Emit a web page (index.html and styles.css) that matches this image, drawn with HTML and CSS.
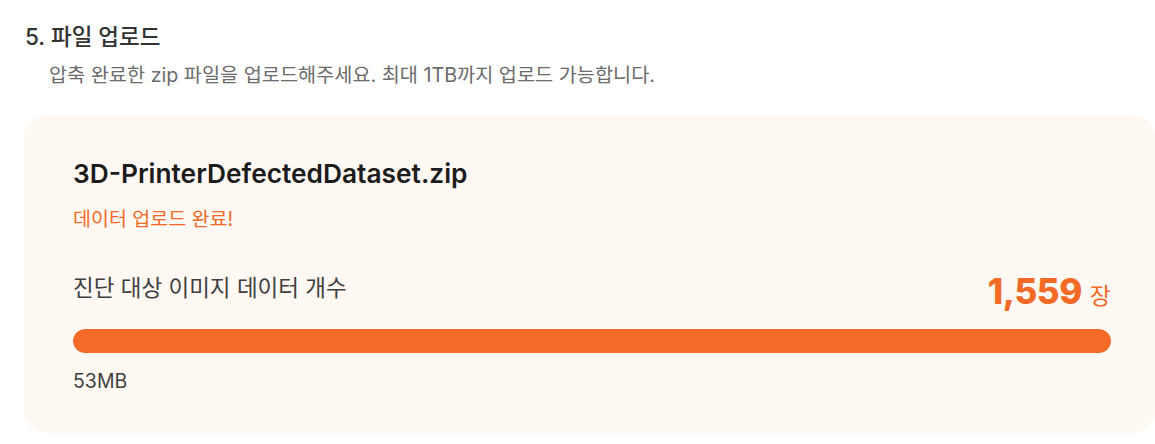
FILE: index.html
```html
<!DOCTYPE html>
<html lang="ko">
<head>
<meta charset="utf-8">
<link rel="stylesheet" href="styles.css">
</head>
<body>
<section class="upload">
  <h2 class="title">5. 파일 업로드</h2>
  <p class="desc">압축 완료한 zip 파일을 업로드해주세요. 최대 1TB까지 업로드 가능합니다.</p>
  <div class="card">
    <div class="filename">3D-PrinterDefectedDataset.zip</div>
    <div class="status">데이터 업로드 완료!</div>
    <div class="count-row">
      <span class="count-label">진단 대상 이미지 데이터 개수</span>
      <span class="count"><span class="count-num">1,559</span><span class="count-unit">장</span></span>
    </div>
    <div class="bar"><div class="bar-fill" style="width:100%"></div></div>
    <div class="size">53MB</div>
  </div>
</section>
</body>
</html>
```
FILE: styles.css
```css
* { box-sizing: border-box; }
html, body { margin: 0; padding: 0; background: #fff; }
body {
  font-family: Inter, "Noto Sans CJK KR", "Noto Sans", sans-serif;
  color: #333;
}
.upload { padding: 22px 0 0 24px; }
.title {
  margin: 0;
  padding-left: 1px;
  font-size: 22.5px;
  font-weight: 500;
  line-height: 30px;
  color: #333;
}
.desc {
  margin: 10px 0 0;
  padding-left: 25px;
  font-size: 19.7px;
  font-weight: 400;
  line-height: 26px;
  color: #6b6b6b;
}
.card {
  margin-top: 27px;
  width: 1131px;
  background: #fff8f3;
  border-radius: 22px;
  padding: 43px 44px 40px 49px;
}
.filename {
  font-size: 26.3px;
  font-weight: 600;
  line-height: 32px;
  color: #1c1c1c;
}
.status {
  margin-top: 17px;
  font-size: 19.5px;
  line-height: 24px;
  color: #f26a26;
}
.count-row {
  margin-top: 40px;
  display: flex;
  justify-content: space-between;
  align-items: center;
  height: 40px;
}
.count-label {
  font-size: 22.5px;
  line-height: 30px;
  color: #3f3f3f;
  margin-top: -6px;
}
.count { display: flex; align-items: baseline; gap: 8px; }
.count-num {
  font-size: 35px;
  font-weight: 800;
  line-height: 40px;
  color: #f26a26;
  letter-spacing: -0.5px;
}
.count-unit {
  font-size: 23px;
  color: #f26a26;
}
.bar {
  margin-top: 18px;
  height: 24px;
  border-radius: 12px;
  background: #f9dccb;
  overflow: hidden;
}
.bar-fill {
  height: 100%;
  background: #f56a27;
  border-radius: 12px;
}
.size {
  margin-top: 16px;
  font-size: 19.5px;
  line-height: 24px;
  color: #3f3f3f;
}
```
